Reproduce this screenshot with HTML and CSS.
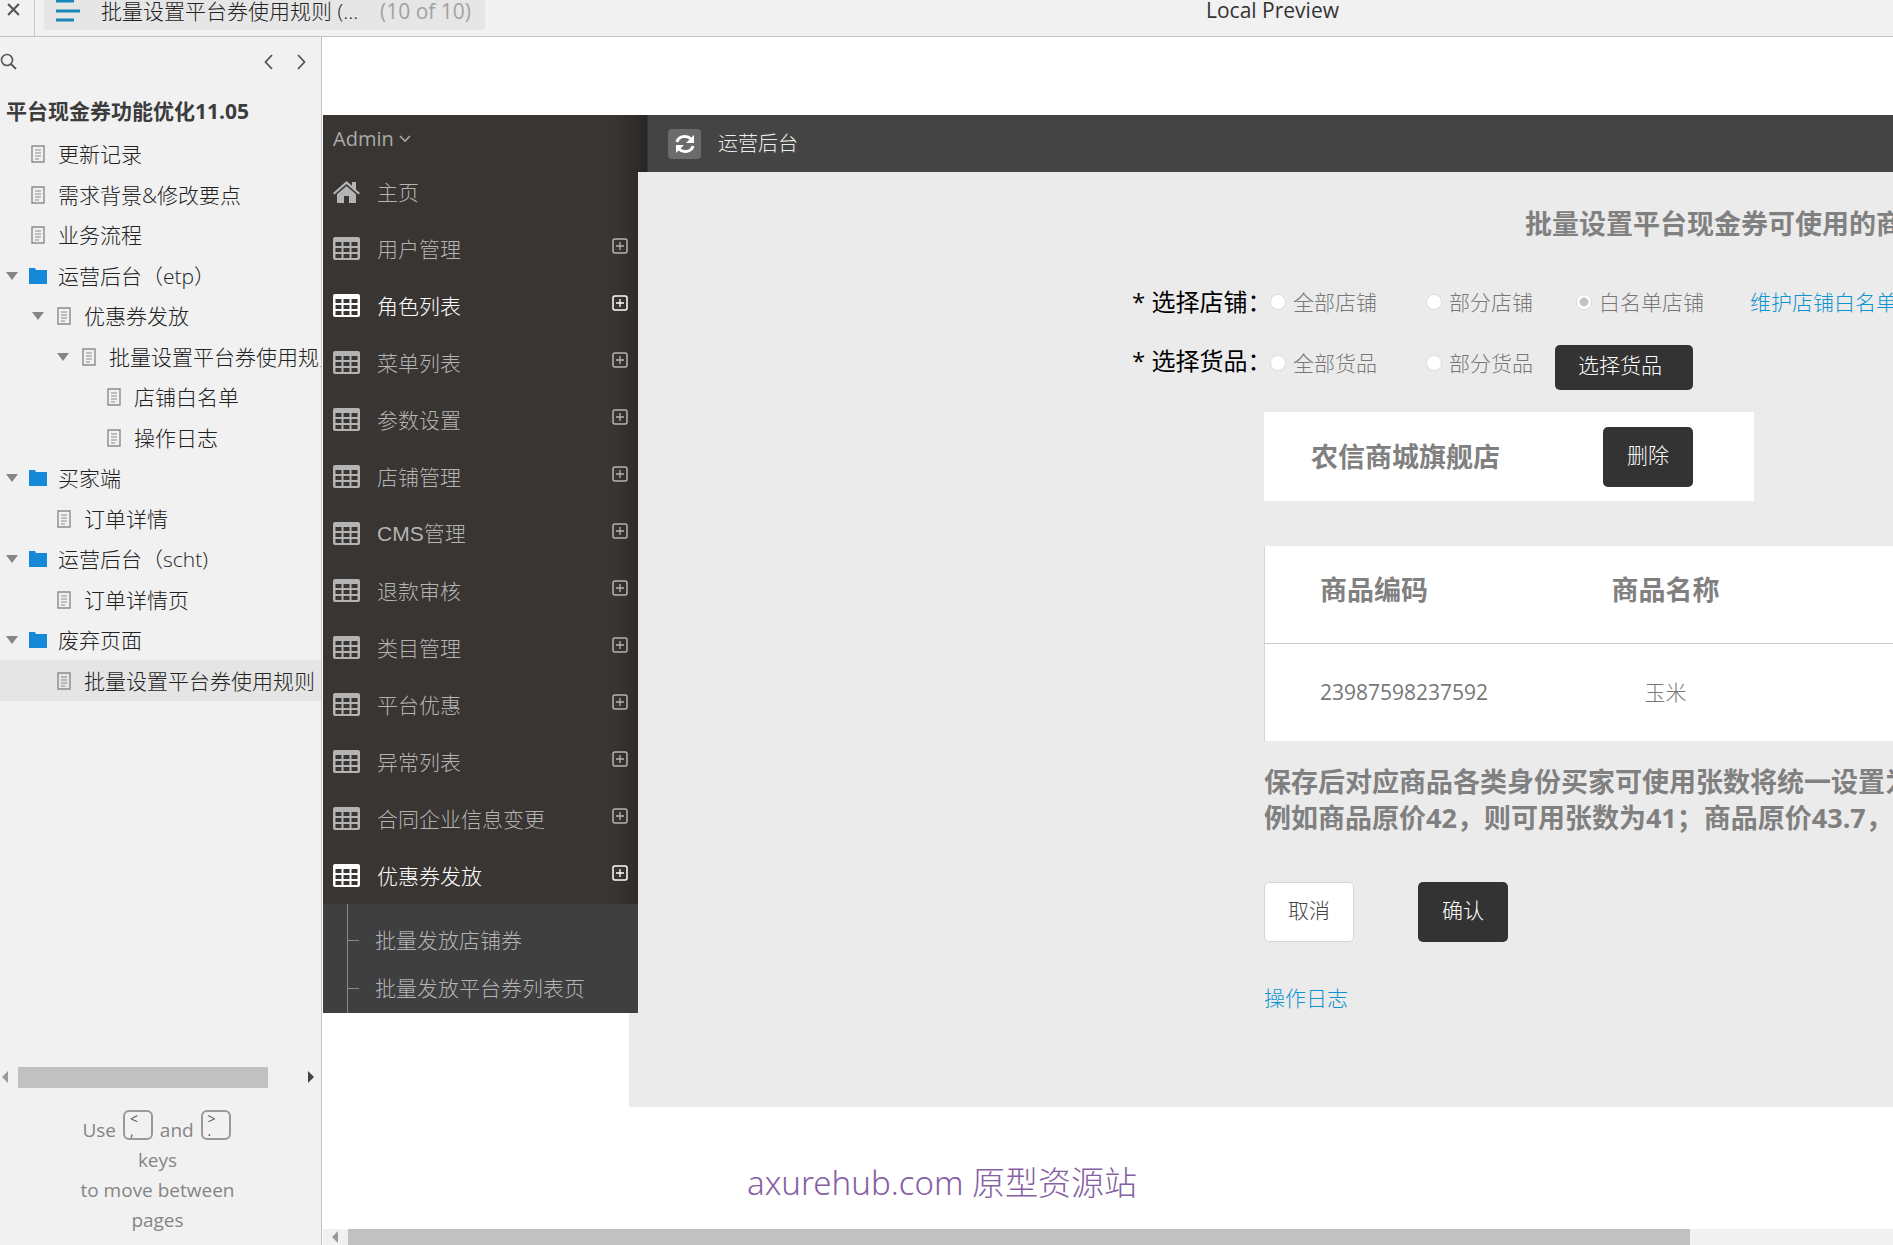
FILE: index.html
```html
<!DOCTYPE html>
<html lang="zh-CN">
<head>
<meta charset="utf-8">
<title>Local Preview</title>
<link rel="stylesheet" href="styles.css">
</head>
<body>
<svg class="sprite" aria-hidden="true">
  <symbol id="page" viewBox="0 0 14 18"><path d="M1 1h12v16H1z" fill="none" stroke="#8c8c8c" stroke-width="1.4"/><path d="M4 5h6M4 8h6M4 11h6M4 14h4" stroke="#8c8c8c" stroke-width="1.2"/></symbol>
  <symbol id="folder" viewBox="0 0 18 16"><path d="M0 0h6l1 2h11v14H0z" fill="#1688d8"/></symbol>
  <symbol id="caret" viewBox="0 0 12 8"><path d="M0 0h12L6 8z" fill="#858585"/></symbol>
  <symbol id="grid" viewBox="0 0 27 23"><path fill="currentColor" fill-rule="evenodd" d="M2 0h23a2 2 0 0 1 2 2v19a2 2 0 0 1-2 2H2a2 2 0 0 1-2-2V2a2 2 0 0 1 2-2zM2.500 5v4h6V5zM10.500 5v4h6V5zM18.500 5v4h6V5zM2.500 11v4h6v-4zM10.500 11v4h6v-4zM18.500 11v4h6v-4zM2.500 17v4h6v-4zM10.500 17v4h6v-4zM18.500 17v4h6v-4z"/></symbol>
  <symbol id="plus" viewBox="0 0 16 16"><rect x="1" y="1" width="14" height="14" rx="2" fill="none" stroke="currentColor" stroke-width="1.5"/><path d="M8 4v8M4 8h8" stroke="currentColor" stroke-width="1.3"/></symbol>
</svg>

<header class="topbar">
  <button class="close" aria-label="Close"><svg width="13" height="13" viewBox="0 0 12 12"><path d="M1 1l10 10M11 1L1 11" stroke="#555" stroke-width="2"/></svg></button>
  <button class="tab">
    <svg width="24" height="24" viewBox="0 0 24 24"><path d="M0 3h18M0 13h24M0 22h18" stroke="#1a86b5" stroke-width="3"/></svg>
    <span class="tab-name">批量设置平台券使用规则 (...</span>
    <span class="tab-count">(10 of 10)</span>
  </button>
  <h1 class="preview-title">Local Preview</h1>
</header>

<div class="body">
  <aside class="pages">
    <div class="tools">
      <button aria-label="Search"><svg width="17" height="17" viewBox="0 0 17 17"><circle cx="7" cy="7" r="5.5" fill="none" stroke="#555" stroke-width="1.6"/><path d="M11 11l5 5" stroke="#555" stroke-width="1.8"/></svg></button>
      <span class="arrows">
        <button aria-label="Previous page"><svg width="9" height="16" viewBox="0 0 9 16"><path d="M8 1L1.500 8L8 15" fill="none" stroke="#555" stroke-width="1.8"/></svg></button>
        <button aria-label="Next page"><svg width="9" height="16" viewBox="0 0 9 16"><path d="M1 1l6.500 7L1 15" fill="none" stroke="#555" stroke-width="1.8"/></svg></button>
      </span>
    </div>
    <h2 class="project">平台现金券功能优化11.05</h2>
    <ul class="tree">
      <li><span class="toggle"></span><svg class="ico"><use href="#page"/></svg><a href="#">更新记录</a></li>
      <li><span class="toggle"></span><svg class="ico"><use href="#page"/></svg><a href="#">需求背景&amp;修改要点</a></li>
      <li><span class="toggle"></span><svg class="ico"><use href="#page"/></svg><a href="#">业务流程</a></li>
      <li><svg class="toggle"><use href="#caret"/></svg><svg class="ico"><use href="#folder"/></svg><a href="#">运营后台（etp）</a></li>
      <li class="l1"><svg class="toggle"><use href="#caret"/></svg><svg class="ico"><use href="#page"/></svg><a href="#">优惠券发放</a></li>
      <li class="l2"><svg class="toggle"><use href="#caret"/></svg><svg class="ico"><use href="#page"/></svg><a href="#">批量设置平台券使用规则</a></li>
      <li class="l3"><span class="toggle"></span><svg class="ico"><use href="#page"/></svg><a href="#">店铺白名单</a></li>
      <li class="l3"><span class="toggle"></span><svg class="ico"><use href="#page"/></svg><a href="#">操作日志</a></li>
      <li><svg class="toggle"><use href="#caret"/></svg><svg class="ico"><use href="#folder"/></svg><a href="#">买家端</a></li>
      <li class="l1"><span class="toggle"></span><svg class="ico"><use href="#page"/></svg><a href="#">订单详情</a></li>
      <li><svg class="toggle"><use href="#caret"/></svg><svg class="ico"><use href="#folder"/></svg><a href="#">运营后台（scht)</a></li>
      <li class="l1"><span class="toggle"></span><svg class="ico"><use href="#page"/></svg><a href="#">订单详情页</a></li>
      <li><svg class="toggle"><use href="#caret"/></svg><svg class="ico"><use href="#folder"/></svg><a href="#">废弃页面</a></li>
      <li class="l1 current"><span class="toggle"></span><svg class="ico"><use href="#page"/></svg><a href="#">批量设置平台券使用规则</a></li>
    </ul>
    <div class="scroll">
      <svg width="6" height="12" viewBox="0 0 6 12"><path d="M6 0v12L0 6z" fill="#9a9a9a"/></svg>
      <span class="thumb"></span>
      <svg width="6" height="12" viewBox="0 0 6 12"><path d="M0 0v12l6-6z" fill="#444"/></svg>
    </div>
    <p class="hint">Use <kbd>&lt;<br>,</kbd> and <kbd>&gt;<br>.</kbd><br>keys<br>to move between<br>pages</p>
  </aside>

  <main class="canvas">
    <div class="app">
      <nav class="menu">
        <button class="account">Admin <svg width="12" height="8" viewBox="0 0 12 8"><path d="M1 1l5 5 5-5" fill="none" stroke="#aaa" stroke-width="1.6"/></svg></button>
        <ul class="items">
          <li><svg class="mi" viewBox="0 0 27 23"><path fill="currentColor" d="M13.500 1L0 13l1.500 1.500L13.500 4l12 10.500L27 13l-4-3.600V2h-4v3.800zM13.500 6L4 14.300V23h7v-7h5v7h7v-8.700z"/></svg><a href="#">主页</a></li>
          <li><svg class="mi"><use href="#grid"/></svg><a href="#">用户管理</a><svg class="plus"><use href="#plus"/></svg></li>
          <li class="on"><svg class="mi"><use href="#grid"/></svg><a href="#">角色列表</a><svg class="plus"><use href="#plus"/></svg></li>
          <li><svg class="mi"><use href="#grid"/></svg><a href="#">菜单列表</a><svg class="plus"><use href="#plus"/></svg></li>
          <li><svg class="mi"><use href="#grid"/></svg><a href="#">参数设置</a><svg class="plus"><use href="#plus"/></svg></li>
          <li><svg class="mi"><use href="#grid"/></svg><a href="#">店铺管理</a><svg class="plus"><use href="#plus"/></svg></li>
          <li><svg class="mi"><use href="#grid"/></svg><a href="#" class="latin">CMS管理</a><svg class="plus"><use href="#plus"/></svg></li>
          <li><svg class="mi"><use href="#grid"/></svg><a href="#">退款审核</a><svg class="plus"><use href="#plus"/></svg></li>
          <li><svg class="mi"><use href="#grid"/></svg><a href="#">类目管理</a><svg class="plus"><use href="#plus"/></svg></li>
          <li><svg class="mi"><use href="#grid"/></svg><a href="#">平台优惠</a><svg class="plus"><use href="#plus"/></svg></li>
          <li><svg class="mi"><use href="#grid"/></svg><a href="#">异常列表</a><svg class="plus"><use href="#plus"/></svg></li>
          <li><svg class="mi"><use href="#grid"/></svg><a href="#">合同企业信息变更</a><svg class="plus"><use href="#plus"/></svg></li>
          <li class="on"><svg class="mi"><use href="#grid"/></svg><a href="#">优惠券发放</a><svg class="plus"><use href="#plus"/></svg></li>
        </ul>
        <ul class="sub">
          <li><a href="#">批量发放店铺券</a></li>
          <li><a href="#">批量发放平台券列表页</a></li>
        </ul>
      </nav>

      <section class="work">
        <header class="bar">
          <button class="refresh" aria-label="刷新"><svg width="22" height="20" viewBox="0 0 22 20"><path d="M3 8a8 7 0 0 1 14-3M19 12a8 7 0 0 1-14 3" fill="none" stroke="#fff" stroke-width="3"/><path d="M20 1v8h-8zM2 19v-8h8z" fill="#fff"/></svg></button>
          <span>运营后台</span>
        </header>
        <form class="panel">
          <h2 class="title">批量设置平台现金券可使用的商品</h2>
          <div class="row shops">
            <span class="label">* 选择店铺：</span>
            <label><input type="radio" name="shop">全部店铺</label>
            <label><input type="radio" name="shop">部分店铺</label>
            <label><input type="radio" name="shop" checked>白名单店铺</label>
            <a href="#">维护店铺白名单</a>
          </div>
          <div class="row goods">
            <span class="label">* 选择货品：</span>
            <label><input type="radio" name="goods">全部货品</label>
            <label><input type="radio" name="goods">部分货品</label>
            <button type="button" class="btn pick">选择货品</button>
          </div>
          <div class="fields">
            <div class="store"><strong>农信商城旗舰店</strong><button type="button" class="btn">删除</button></div>
            <table>
              <thead><tr><th class="code">商品编码</th><th class="name">商品名称</th><th></th></tr></thead>
              <tbody><tr><td class="code">23987598237592</td><td class="name">玉米</td><td></td></tr></tbody>
            </table>
            <p class="note">保存后对应商品各类身份买家可使用张数将统一设置为<br>例如商品原价42，则可用张数为41；商品原价43.7，</p>
            <div class="actions"><button type="button" class="btn plain">取消</button><button type="button" class="btn">确认</button></div>
            <a class="log" href="#">操作日志</a>
          </div>
        </form>
      </section>
    </div>
    <p class="site">axurehub.com 原型资源站</p>
    <div class="scroll wide">
      <svg width="6" height="12" viewBox="0 0 6 12"><path d="M6 0v12L0 6z" fill="#9a9a9a"/></svg>
      <span class="thumb"></span>
    </div>
  </main>
</div>
</body>
</html>
```
FILE: styles.css
```css
* { box-sizing: border-box; }
body {
  margin: 0;
  height: 100vh;
  overflow: hidden;
  display: flex;
  flex-direction: column;
  font: 300 21px/30px "Open Sans", "Noto Sans CJK SC", sans-serif;
  color: #222;
  background: #f1f1f1;
}
ul { list-style: none; margin: 0; padding: 0; }
h1, h2, p { margin: 0; }
a { color: inherit; text-decoration: none; white-space: nowrap; }
button { font: inherit; color: inherit; border: 0; background: none; padding: 0; white-space: nowrap; }
svg { display: block; flex: none; }
.sprite { display: none; }

/* top bar */
.topbar { display: grid; grid-template-columns: 35px 441px 1fr; column-gap: 9px; height: 37px; flex: none; border-bottom: 1px solid #c4c4c4; }
.close { display: flex; justify-content: center; padding: 3px 8px 0 0; border-right: 1px solid #c8c8c8; }
.tab { display: flex; height: 30px; padding-left: 12px; background: #e6e6e6; border-radius: 0 0 4px 4px; line-height: 22px; }
.tab svg { margin: -2px 21px 0 0; }
.tab-name { width: 279px; text-align: left; }
.tab-count { color: #a2a2a2; font-weight: 400; }
.preview-title { padding-left: 712px; font-size: 21px; line-height: 20px; font-weight: 400; color: #333; }

.body { flex: 1; min-height: 0; display: flex; }

/* page list */
.pages { width: 322px; flex: none; display: flex; flex-direction: column; border-right: 1px solid #c4c4c4; overflow: hidden; }
.tools { display: flex; justify-content: space-between; align-items: center; height: 49px; padding-right: 15px; flex: none; }
.arrows { display: flex; gap: 24px; }
.project { height: 48px; padding-left: 6px; font-size: 21px; line-height: 50px; font-weight: 700; color: #3c3c3c; white-space: nowrap; }
.tree li { display: flex; align-items: center; height: 40px; padding-left: 6px; }
.tree li:nth-child(even) { height: 41px; }
.tree .l1 { padding-left: 32px; }
.tree .l2 { padding-left: 57px; }
.tree .l3 { padding-left: 82px; }
.tree .current { background: #e5e5e5; }
.toggle { width: 12px; height: 8px; margin-right: 11px; flex: none; }
.ico { width: 18px; height: 18px; margin-right: 11px; }
.scroll { display: flex; align-items: center; gap: 10px; height: 22px; flex: none; padding-left: 2px; }
.thumb { width: 250px; height: 21px; background: #c1c1c1; }
.pages .scroll { margin-top: auto; }
.pages .scroll svg:last-child { margin-left: 30px; }
.hint { padding: 22px 6px 10px 0; text-align: center; font-size: 19px; font-weight: 400; color: #858585; }
kbd { display: inline-block; width: 30px; height: 30px; padding: 1px 5px; margin: 0 2px 5px; border: 2px solid #999; border-radius: 6px; font: 400 14px/12px "Open Sans", sans-serif; text-align: left; color: #555; vertical-align: bottom; }

/* canvas */
.canvas { flex: 1; min-width: 0; overflow: hidden; display: flex; flex-direction: column; padding-left: 1px; background: #fff; }
.app { display: flex; align-items: flex-start; margin-top: 78px; }
.menu { width: 315px; flex: none; z-index: 1; color: #b4b4b4; background: linear-gradient(to right, #393532 290px, #2e2b28 315px); }
.account { display: flex; align-items: center; gap: 5px; height: 48px; padding-left: 10px; font-size: 20px; font-weight: 400; color: #aaa; }
.items li { display: flex; align-items: center; height: 57px; padding: 0 10px; }
.mi { width: 27px; height: 23px; margin-right: 17px; }
.plus { width: 16px; height: 16px; margin: 0 0 6px auto; }
.items .on { color: #fff; }
.latin { font-family: "Liberation Sans", "Noto Sans CJK SC", sans-serif; }
.sub { height: 109px; padding-top: 12px; background: linear-gradient(to right, #3f3f3f 24px, #888 24px, #888 25px, #3f3f3f 25px); }
.sub li { display: flex; align-items: center; height: 48px; padding-left: 25px; }
.sub li::before { content: ""; width: 11px; height: 1px; margin-right: 16px; background: #888; }

.work { flex: 1; min-width: 0; }
.bar { display: flex; align-items: center; gap: 17px; height: 57px; padding-left: 30px; font-size: 20px; color: #eee; background: linear-gradient(to right, #2e2b28, #262626 9px, #444 10px); }
.refresh { display: flex; align-items: center; justify-content: center; width: 33px; height: 30px; border-radius: 4px; background: #6b6b6b; }
.panel { height: 935px; margin-left: -9px; padding-left: 9px; background: #ebebeb; overflow: hidden; color: #777; }
.title { padding: 34px 0 0 887px; font-size: 27px; line-height: 36px; font-weight: 700; color: #808080; white-space: nowrap; }
.row { display: grid; grid-template-columns: 616px 156px 150px 166px 1fr; align-items: center; height: 60px; white-space: nowrap; }
.shops { margin-top: 30px; }
.row .label { padding-left: 494px; font-size: 24px; font-weight: 400; color: #000; }
.row label { display: flex; align-items: center; padding-left: 16px; gap: 7px; }
.row input { appearance: none; width: 16px; height: 16px; margin: 0; border: 1px solid #ddd; border-radius: 50%; background: #fff; }
.row input:checked { background: radial-gradient(#c4c4c4 4px, #fff 5px); }
.row a, .log { color: #0d93cf; }
.row.shops a { padding-left: 24px; }
.goods { grid-template-columns: 616px 156px 145px 1fr; padding-top: 2px; }
.goods .label { padding-bottom: 4px; }
.fields { padding-left: 626px; }
.btn { width: 90px; height: 60px; padding-bottom: 4px; border-radius: 5px; background: #333; color: #fff; }
.pick { width: 138px; height: 45px; margin-top: 8px; text-align: left; padding-left: 23px; }
.plain { background: #fff; border: 1px solid #d5d5d5; color: #444; }
.store { display: flex; justify-content: space-between; align-items: center; width: 490px; height: 89px; margin-top: 20px; padding: 0 61px 0 47px; background: #fff; }
.store strong, th, .note { font-size: 27px; font-weight: 700; color: #808080; }
table { width: 100%; margin-top: 45px; table-layout: fixed; border-collapse: collapse; background: #fff; border-left: 1px solid #d5d5d5; }
th, td { height: 98px; padding: 0; }
th { height: 97px; padding-bottom: 8px; border-bottom: 1px solid #ccc; }
.code { width: 299px; padding-left: 55px; text-align: left; }
td.code { font-weight: 400; }
.name { width: 204px; text-align: center; }
.note { padding-top: 23px; line-height: 36px; white-space: nowrap; }
.actions { display: flex; gap: 64px; margin-top: 46px; }
.log { display: inline-block; margin-top: 41px; }
.site { padding: 52px 0 0 424px; font: 300 33px/48px "Noto Sans", "Noto Sans CJK SC", sans-serif; color: #8660a5; white-space: nowrap; }
.wide { height: 16px; margin-top: auto; padding-left: 9px; background: #f1f1f1; }
.wide .thumb { width: 86%; height: 16px; }
```
